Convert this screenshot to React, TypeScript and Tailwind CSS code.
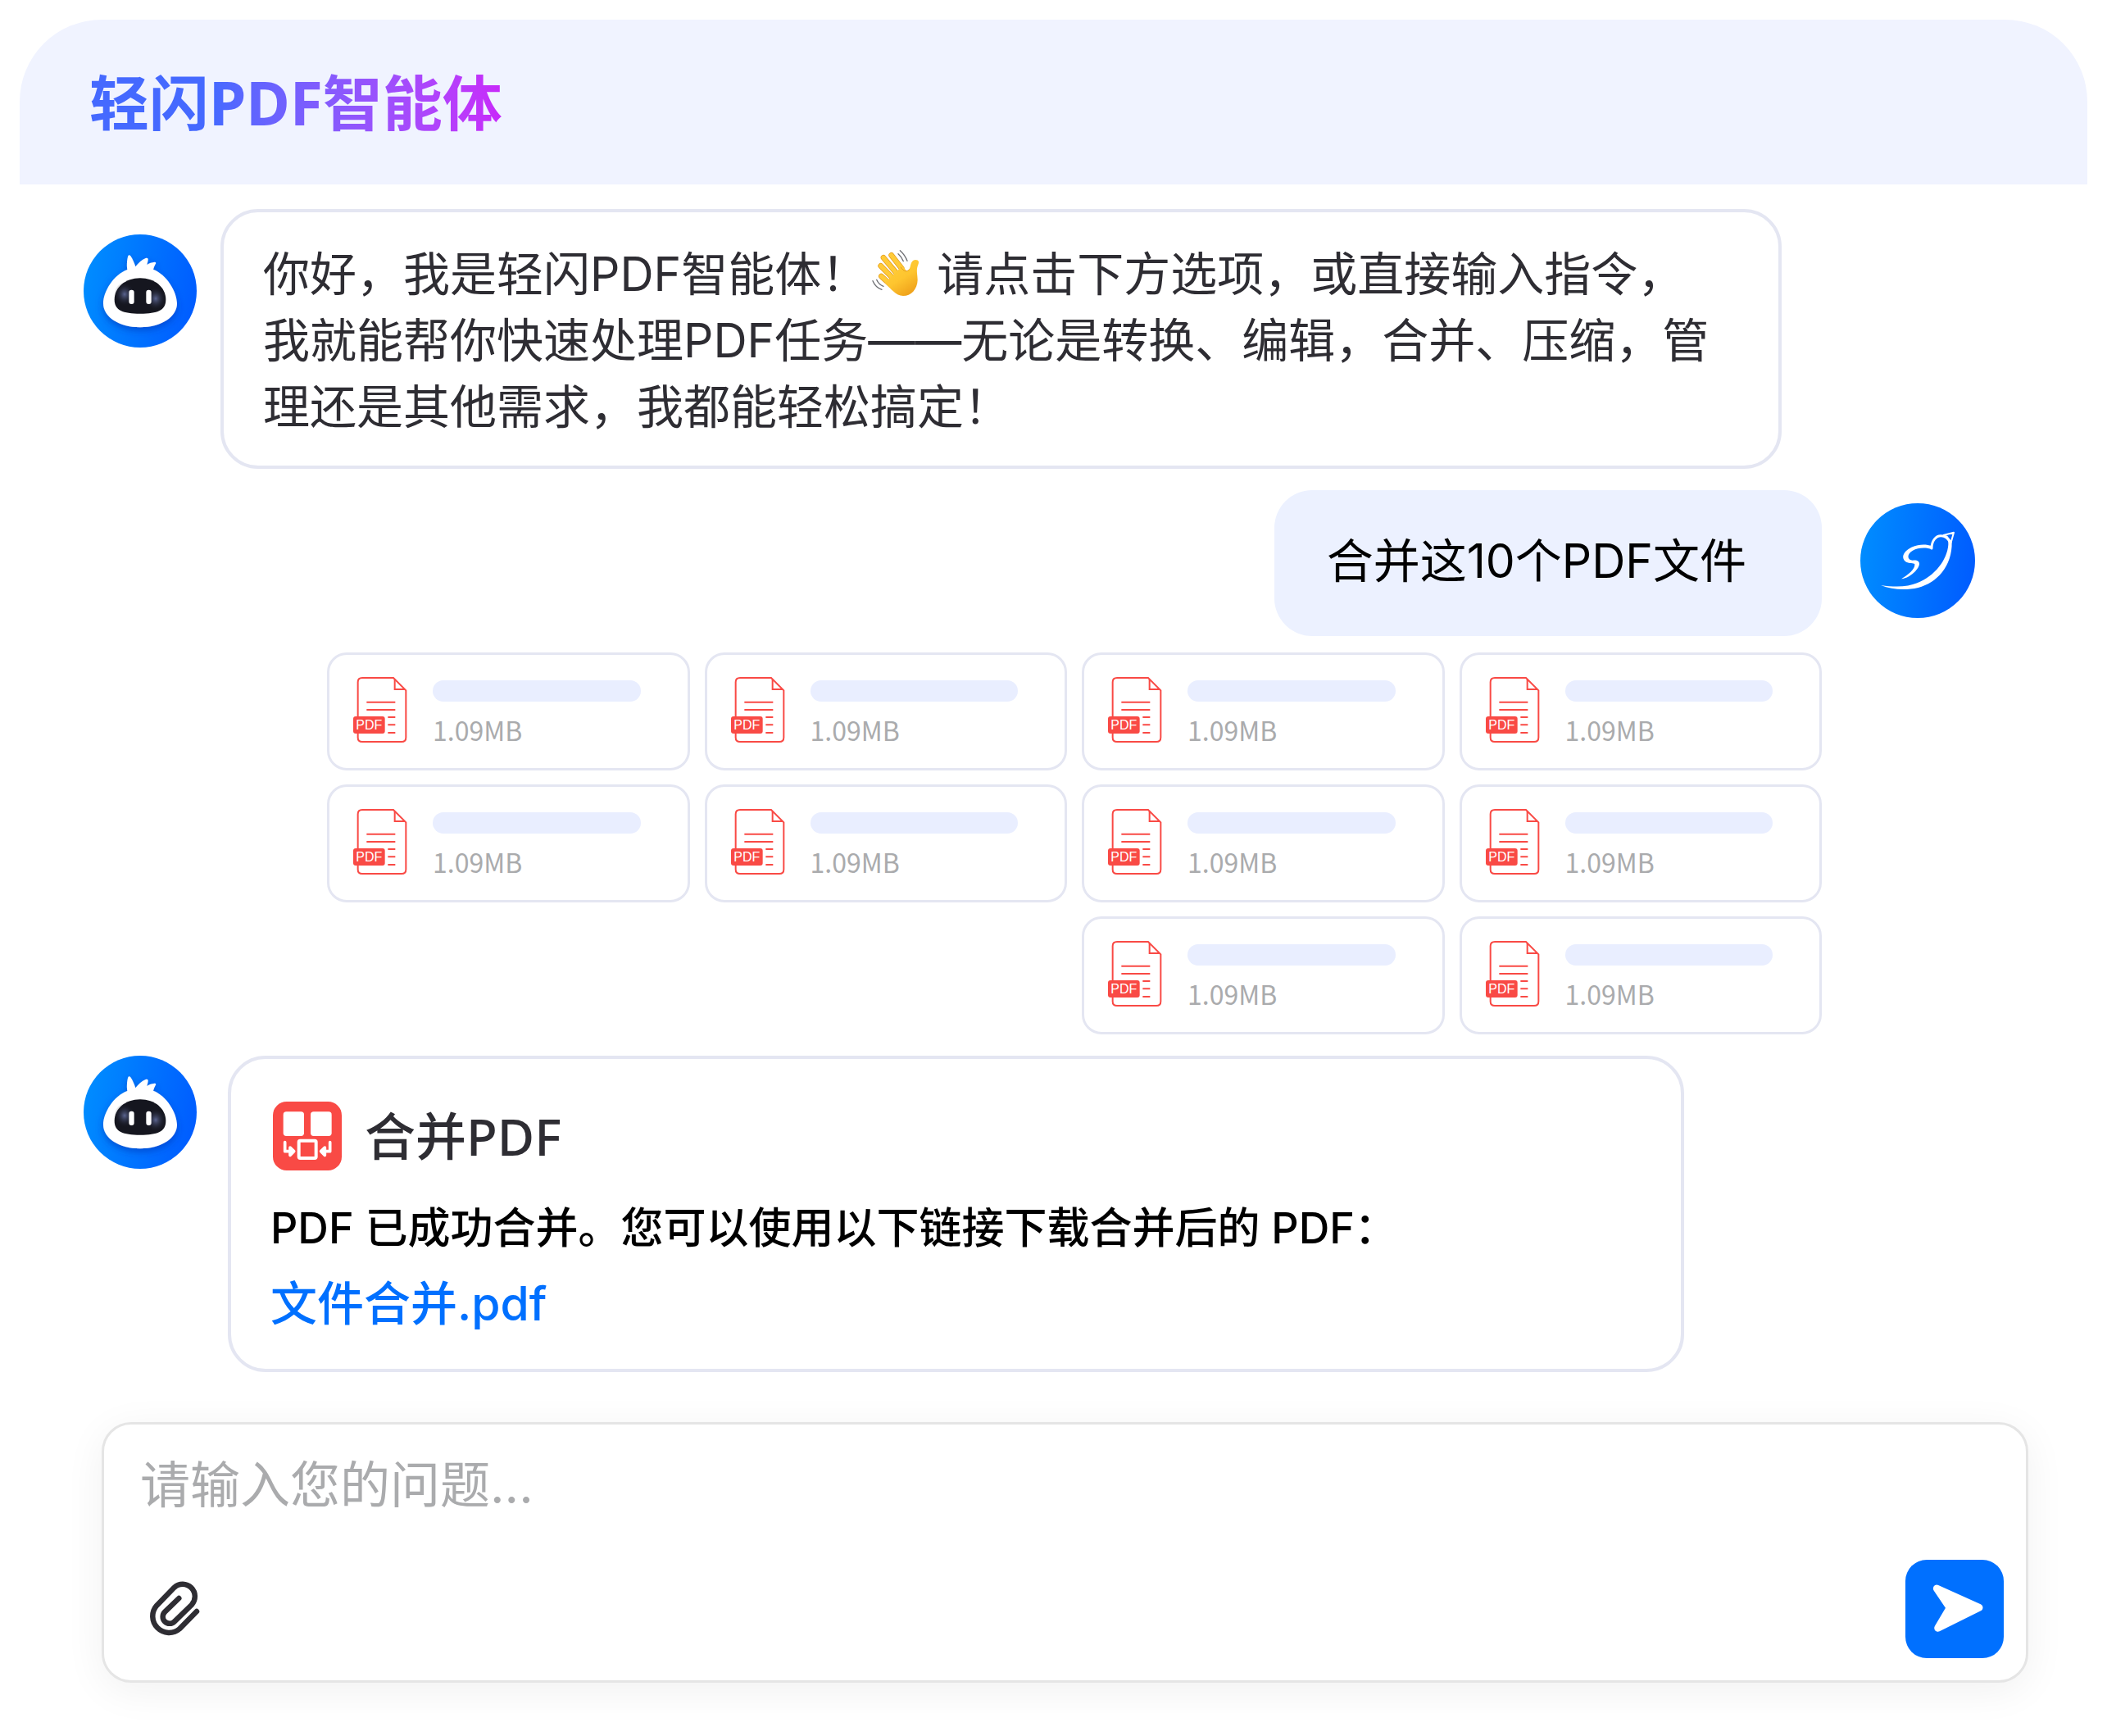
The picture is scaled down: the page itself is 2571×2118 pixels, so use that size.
// src/App.tsx
import { useState } from 'react';

const files = Array.from({ length: 10 }, (_, i) => ({ id: i + 1, size: '1.09MB' }));

function BotAvatar() {
  return (
    <svg viewBox="36 49 414 414" className="size-[138px] shrink-0" role="img" aria-label="轻闪PDF智能体">
      <defs>
        <linearGradient id="botBg" x1="0" y1="0.4" x2="1" y2="0.6">
          <stop offset="0" stopColor="#008cff" />
          <stop offset="1" stopColor="#005cff" />
        </linearGradient>
        <radialGradient id="botEye">
          <stop offset="0" stopColor="#5a6490" />
          <stop offset="1" stopColor="#15161f" stopOpacity="0" />
        </radialGradient>
        <filter id="botShadow" x="-20%" y="-20%" width="140%" height="150%">
          <feDropShadow dx="0" dy="12" stdDeviation="12" floodColor="#0038b8" floodOpacity="0.6" />
        </filter>
      </defs>
      <circle cx="243" cy="256" r="207" fill="url(#botBg)" />
      <path
        filter="url(#botShadow)"
        fill="#fff"
        d="M196 178C193 158 196 136 199 128C201 123 205 124 208 128C216 140 222 154 226 167C236 154 249 142 263 136C270 133 273 137 272 142C271 149 270 154 268 160C276 154 286 151 296 150C301 150 302 154 299 158C296 164 293 170 291 177C340 196 378 258 378 302C378 350 322 389 243 389C164 389 108 350 108 302C108 258 146 196 196 178Z"
      />
      <path
        fill="#15161f"
        d="M243 209C297 209 337 243 337 288C337 326 307 339 243 339C179 339 149 326 149 288C149 243 189 209 243 209Z"
      />
      <ellipse cx="186" cy="268" rx="38" ry="44" fill="url(#botEye)" />
      <ellipse cx="300" cy="284" rx="38" ry="44" fill="url(#botEye)" />
      <rect x="202" y="252" width="19" height="52" rx="9" fill="#fff" />
      <rect x="265" y="252" width="19" height="52" rx="9" fill="#fff" />
    </svg>
  );
}

function UserAvatar() {
  return (
    <svg viewBox="60 70 420 420" className="size-[140px] shrink-0" role="img" aria-label="用户">
      <defs>
        <linearGradient id="userBg" x1="0" y1="0.45" x2="1" y2="0.55">
          <stop offset="0" stopColor="#008cff" />
          <stop offset="1" stopColor="#005cff" />
        </linearGradient>
      </defs>
      <circle cx="270" cy="280" r="210" fill="url(#userBg)" />
      <path
        fill="#fff"
        d="M135 370C190 378 235 376 268 362C335 335 378 275 382 222C383 207 380 200 372 196L395 212C397 300 340 362 272 379C225 390 175 386 135 370Z"
      />
      <path
        fill="#fff"
        d="M322 239C300 230 270 233 252 243C228 257 232 278 252 279C285 276 280 300 262 318C248 333 228 345 210 347C232 333 262 312 259 292C255 288 240 291 228 285C208 272 214 247 247 231C275 219 300 219 321 226Z"
      />
      <path d="M321 235C321 206 338 188 356 189C370 190 380 196 387 210" fill="none" stroke="#fff" strokeWidth="9" strokeLinecap="round" />
      <path d="M364 187L402 177L392 213L376 191Z" fill="none" stroke="#fff" strokeWidth="6" strokeLinejoin="round" />
    </svg>
  );
}

function WaveEmoji() {
  return (
    <svg viewBox="70 60 180 180" className="-mt-2 mr-1 mb-1 ml-1 inline-block size-[60px] align-middle" role="img" aria-label="挥手">
      <defs>
        <linearGradient id="hand" x1="0" y1="0" x2="0.6" y2="1">
          <stop offset="0" stopColor="#ffd03c" />
          <stop offset="0.6" stopColor="#fec52f" />
          <stop offset="1" stopColor="#f0a41c" />
        </linearGradient>
      </defs>
      <g fill="none" strokeLinecap="round">
        <g stroke="#e39a1b" strokeWidth="20">
          <path d="M144 85L182 134" />
          <path d="M115 94L162 150" />
          <path d="M105 124L150 170" />
          <path d="M107 162L142 194" />
        </g>
        <g stroke="#ffcb38" strokeWidth="16">
          <path d="M144 85L190 144" />
          <path d="M115 94L170 160" />
          <path d="M105 124L160 180" />
          <path d="M107 162L150 200" />
        </g>
        <g stroke="#6d6e72" strokeWidth="4">
          <path d="M176 68Q194 84 202 106" />
          <path d="M169 80Q182 91 188 107" />
          <path d="M76 179Q86 203 109 211" />
          <path d="M90 175Q98 193 115 199" />
        </g>
      </g>
      <path
        fill="url(#hand)"
        d="M178 130C190 146 200 145 209 137C216 128 212 104 232 102C246 102 246 112 241 122C234 140 240 156 240 176C239 210 216 234 187 234C160 233 142 208 120 186L150 158Z"
      />
      <path d="M178 128C190 147 202 146 210 137" fill="none" stroke="#e39a1b" strokeWidth="3" />
    </svg>
  );
}

function PdfIcon() {
  return (
    <svg viewBox="125 135 198 240" className="mb-1 h-20 w-[66px] shrink-0" aria-hidden="true">
      <g fill="none" stroke="#f94a45" strokeWidth="6">
        <path d="M158 138H272L318 184V356Q318 372 302 372H158Q142 372 142 356V154Q142 138 158 138Z" />
        <path d="M277 143V180H314" />
        <path d="M174 227H279M174 255H279M252 282H279M252 310H279M252 339H279" />
      </g>
      <rect x="125" y="279" width="116" height="63" rx="9" fill="#f94a45" />
      <text x="183" y="328" textAnchor="middle" fill="#fff" fontSize="48" fontFamily="Liberation Sans, sans-serif">
        PDF
      </text>
    </svg>
  );
}

function MergeIcon() {
  return (
    <svg viewBox="0 0 252 252" className="size-[84px] shrink-0" aria-hidden="true">
      <rect width="252" height="252" rx="50" fill="#f94a45" />
      <rect x="38" y="37" width="76" height="89" rx="11" fill="#fff" />
      <rect x="138" y="37" width="77" height="89" rx="11" fill="#fff" />
      <rect x="95" y="143" width="63" height="64" rx="5" fill="none" stroke="#fff" strokeWidth="12" />
      <g fill="none" stroke="#fff" strokeWidth="11" strokeLinecap="round" strokeLinejoin="round">
        <path d="M44 149V182H70" />
        <path d="M209 149V182H183" />
        <path d="M63 168L77 182L63 196Z" fill="#fff" />
        <path d="M190 168L176 182L190 196Z" fill="#fff" />
      </g>
    </svg>
  );
}

function FileCard({ size }: { size: string }) {
  return (
    <li className="flex h-36 items-center gap-[31px] rounded-3xl border-3 border-[#e4e6f2] bg-white pl-[29px]">
      <PdfIcon />
      <div className="min-w-0 flex-1 pt-1 pr-[57px]">
        <div className="h-[26px] rounded-full bg-[#e9eeff]" />
        <p className="mt-[14px] text-[32px] leading-10 text-[#aaabad]">{size}</p>
      </div>
    </li>
  );
}

export default function App() {
  const [message, setMessage] = useState('');

  const handleSubmit = (e: React.FormEvent) => {
    e.preventDefault();
    setMessage('');
  };

  return (
    <div lang="zh-CN" className="bg-white p-6 font-['Noto_Sans_CJK_SC',sans-serif] text-[#2e2d33]">
      <header className="flex h-[201px] items-center rounded-t-[100px] bg-[#f0f3ff] px-[85px]">
        <h1 className="bg-linear-to-r from-[#4569ff] from-30% to-[#c828fa] bg-clip-text font-['Noto_Sans','Noto_Sans_CJK_SC',sans-serif] text-[73px] leading-[100px] font-bold text-transparent">
          轻闪PDF智能体
        </h1>
      </header>

      <main className="pr-[137px] pl-[78px] font-['Inter','Noto_Sans_CJK_SC',sans-serif]">
        {/* Saudação */}
        <div className="mt-[30px] flex items-start">
          <div className="mt-[31px] shrink-0">
            <BotAvatar />
          </div>
          <p className="mr-[236px] ml-[29px] flex-1 rounded-[46px] border-4 border-[#e4e6f2] px-12 pt-[35px] pb-[31px] text-[57px] leading-[81px]">
            你好，我是轻闪PDF智能体！
            <WaveEmoji /> 请点击下方选项，或直接输入指令，
            <br />
            我就能帮你快速处理PDF任务——无论是转换、编辑，合并、压缩，管理还是其他需求，我都能轻松搞定！
          </p>
        </div>

        <div className="mt-[26px] flex items-start justify-end gap-[47px]">
          <p className="rounded-[46px] bg-[#ecf1ff] pt-[46px] pr-[92px] pb-[50px] pl-16 text-[57px] leading-[82px] text-black">
            合并这10个PDF文件
          </p>
          <div className="mt-4 shrink-0">
            <UserAvatar />
          </div>
        </div>

        <ul className="mt-5 mr-[187px] ml-[297px] grid grid-cols-4 gap-x-[18px] gap-y-[17px] font-['Noto_Sans_CJK_SC',sans-serif]">
          {files.slice(0, 8).map((file) => (
            <FileCard key={file.id} size={file.size} />
          ))}
          <li className="col-span-2" aria-hidden="true" />
          {files.slice(8).map((file) => (
            <FileCard key={file.id} size={file.size} />
          ))}
        </ul>

        {/* Resultado */}
        <div className="mt-[26px] flex items-start">
          <BotAvatar />
          <section className="mr-[355px] ml-[38px] flex-1 rounded-[46px] border-4 border-[#e4e6f2] px-12 pt-[52px] pb-[33px]">
            <div className="ml-[3px] flex items-center gap-7">
              <MergeIcon />
              <h2 className="font-['Noto_Sans','Noto_Sans_CJK_SC',sans-serif] text-[62px] leading-[84px] font-medium">
                合并PDF
              </h2>
            </div>
            <p className="mt-[25px] text-[52px] leading-[92px] font-medium text-black">
              PDF 已成功合并。您可以使用以下链接下载合并后的 PDF：
            </p>
            <a href="#download" className="block text-[57px] leading-[92px] font-medium text-[#0070ff]">
              文件合并.pdf
            </a>
          </section>
        </div>
      </main>

      <form
        onSubmit={handleSubmit}
        className="mt-[61px] mr-[72px] mb-10 ml-[100px] rounded-[36px] border-3 border-[#e5e5e5] bg-white pt-[30px] pr-[27px] pb-[27px] pl-11 shadow-[0_10px_50px_rgba(0,0,0,0.06)]"
      >
        <input
          type="text"
          aria-label="请输入您的问题"
          value={message}
          onChange={(e) => setMessage(e.target.value)}
          placeholder="请输入您的问题..."
          className="block h-[90px] w-full font-['Inter','Noto_Sans_CJK_SC',sans-serif] text-[61px] outline-none placeholder:text-[#aaabad]"
        />
        <div className="mt-[45px] flex items-center justify-between">
          <button type="button" aria-label="添加附件" className="ml-3">
            <svg viewBox="83 212 61 68" className="h-[68px] w-[61px]" aria-hidden="true">
              <path
                d="M140 249L119.300 270.100A20 20 0 0 1 91.100 241.900L112.600 219.800A15 15 0 0 1 133.800 241L112.900 261.400A8.300 8.300 0 0 1 101.100 249.600L118.300 233"
                fill="none"
                stroke="currentColor"
                strokeWidth="6.500"
                strokeLinecap="round"
              />
            </svg>
          </button>
          <button type="submit" aria-label="发送" className="size-[120px] rounded-[26px] bg-[#0070ff]">
            <svg viewBox="135 126 360 360" className="size-full" aria-hidden="true">
              <path d="M250 231L405 301L254 376L298 302Z" fill="#fff" stroke="#fff" strokeWidth="27" strokeLinejoin="round" />
            </svg>
          </button>
        </div>
      </form>
    </div>
  );
}
